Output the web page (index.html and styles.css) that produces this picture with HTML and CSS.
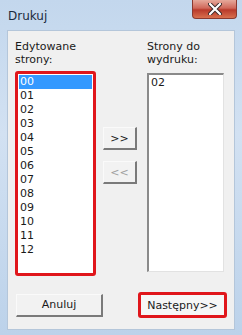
FILE: index.html
```html
<!DOCTYPE html>
<html lang="pl">
<head>
    <meta charset="UTF-8">
    <title>Drukuj</title>
    <link rel="stylesheet" href="styles.css">
</head>
<body>

<div class="window">
    <!-- Title bar -->
    <div class="titlebar">
        <span class="title">Drukuj</span>
        <span class="close-btn">
            <svg width="14" height="12" viewBox="0 0 14 12">
                <path d="M2 1 L12 11 M12 1 L2 11" stroke="#3a2a2a" stroke-width="4" stroke-linecap="round"/>
                <path d="M2 1 L12 11 M12 1 L2 11" stroke="#fff" stroke-width="2.2" stroke-linecap="round"/>
            </svg>
        </span>
    </div>

    <div class="client">
        <div class="columns">
            <div class="col col-left">
                <div class="label">Edytowane<br>strony:</div>
                <ul class="listbox marked">
                    <li class="selected">00</li>
                    <li>01</li>
                    <li>02</li>
                    <li>03</li>
                    <li>04</li>
                    <li>05</li>
                    <li>06</li>
                    <li>07</li>
                    <li>08</li>
                    <li>09</li>
                    <li>10</li>
                    <li>11</li>
                    <li>12</li>
                </ul>
            </div>

            <div class="col col-mid">
                <button class="btn btn-small">&gt;&gt;</button>
                <button class="btn btn-small" disabled>&lt;&lt;</button>
            </div>

            <div class="col col-right">
                <div class="label">Strony do<br>wydruku:</div>
                <ul class="listbox sunken">
                    <li>02</li>
                </ul>
            </div>
        </div>

        <div class="footer">
            <button class="btn btn-wide">Anuluj</button>
            <button class="btn btn-wide btn-marked">Następny&gt;&gt;</button>
        </div>
    </div>
</div>

</body>
</html>
```

FILE: styles.css
```css
body {
    margin: 0;
    font-family: "DejaVu Sans", Tahoma, sans-serif;
    font-size: 11px;
    color: #1a1a1a;
}
.window {
    box-sizing: border-box;
    width: 242px;
    height: 335px;
    padding: 0 7px 5px 7px;
    background: linear-gradient(to bottom, #c3d7ed, #d2e1f2 40%, #bcd2ea);
}
.titlebar {
    display: flex;
    justify-content: space-between;
    align-items: flex-start;
    height: 30px;
}
.title {
    margin: 9px 0 0 1px;
    font-size: 12px;
    color: #1c2b3d;
}
.close-btn {
    display: flex;
    align-items: center;
    justify-content: center;
    width: 43px;
    height: 18px;
    margin-right: -2px;
    border: 1px solid #8a3a30;
    border-top: none;
    border-radius: 0 0 4px 4px;
    background: linear-gradient(to bottom, #e6a99b, #d0685a 45%, #b93a2b 55%, #d8704e);
}
.client {
    box-sizing: border-box;
    height: 300px;
    background-color: #f0f0f0;
    border: 1px solid #b4c6da;
}
.columns {
    display: flex;
    padding: 9px 0 0 7px;
}
.label {
    line-height: 13px;
    height: 26px;
}
.col-left {
    width: 81px;
}
.col-mid {
    display: flex;
    flex-direction: column;
    gap: 11px;
    padding-top: 87px;
    margin-left: 7px;
}
.col-right {
    width: 77px;
    margin-left: 10px;
}
.listbox {
    list-style: none;
    margin: 0;
    padding: 1px;
    box-sizing: border-box;
    background-color: #fff;
    line-height: 14px;
}
.listbox li {
    padding-left: 1px;
}
.listbox .selected {
    background-color: #3399ff;
    color: #fff;
}
.marked {
    margin-top: 5px;
    height: 205px;
    border: 3px solid #e0161b;
    border-radius: 3px;
}
.sunken {
    margin-top: 7px;
    height: 199px;
    border-style: solid;
    border-width: 2px 1px 1px 2px;
    border-color: #8a8a8a #e2e2e2 #e2e2e2 #8a8a8a;
}
.btn {
    box-sizing: border-box;
    font-family: "DejaVu Sans", Tahoma, sans-serif;
    font-size: 11px;
    color: #1a1a1a;
    background-color: #f2f2f2;
    border-style: solid;
    border-width: 1px 2px 2px 1px;
    border-color: #fafafa #7a7a7a #7a7a7a #fafafa;
    padding: 0;
}
.btn:disabled {
    color: #a0a0a0;
}
.btn-small {
    width: 34px;
    height: 23px;
}
.footer {
    display: flex;
    justify-content: space-between;
    align-items: center;
    padding: 16px 7px 0 8px;
}
.btn-wide {
    width: 87px;
    height: 23px;
}
.btn-marked {
    width: 89px;
    height: 26px;
    border: 3px solid #e0161b;
    border-radius: 3px;
    background-color: #f6f6f6;
}
```
